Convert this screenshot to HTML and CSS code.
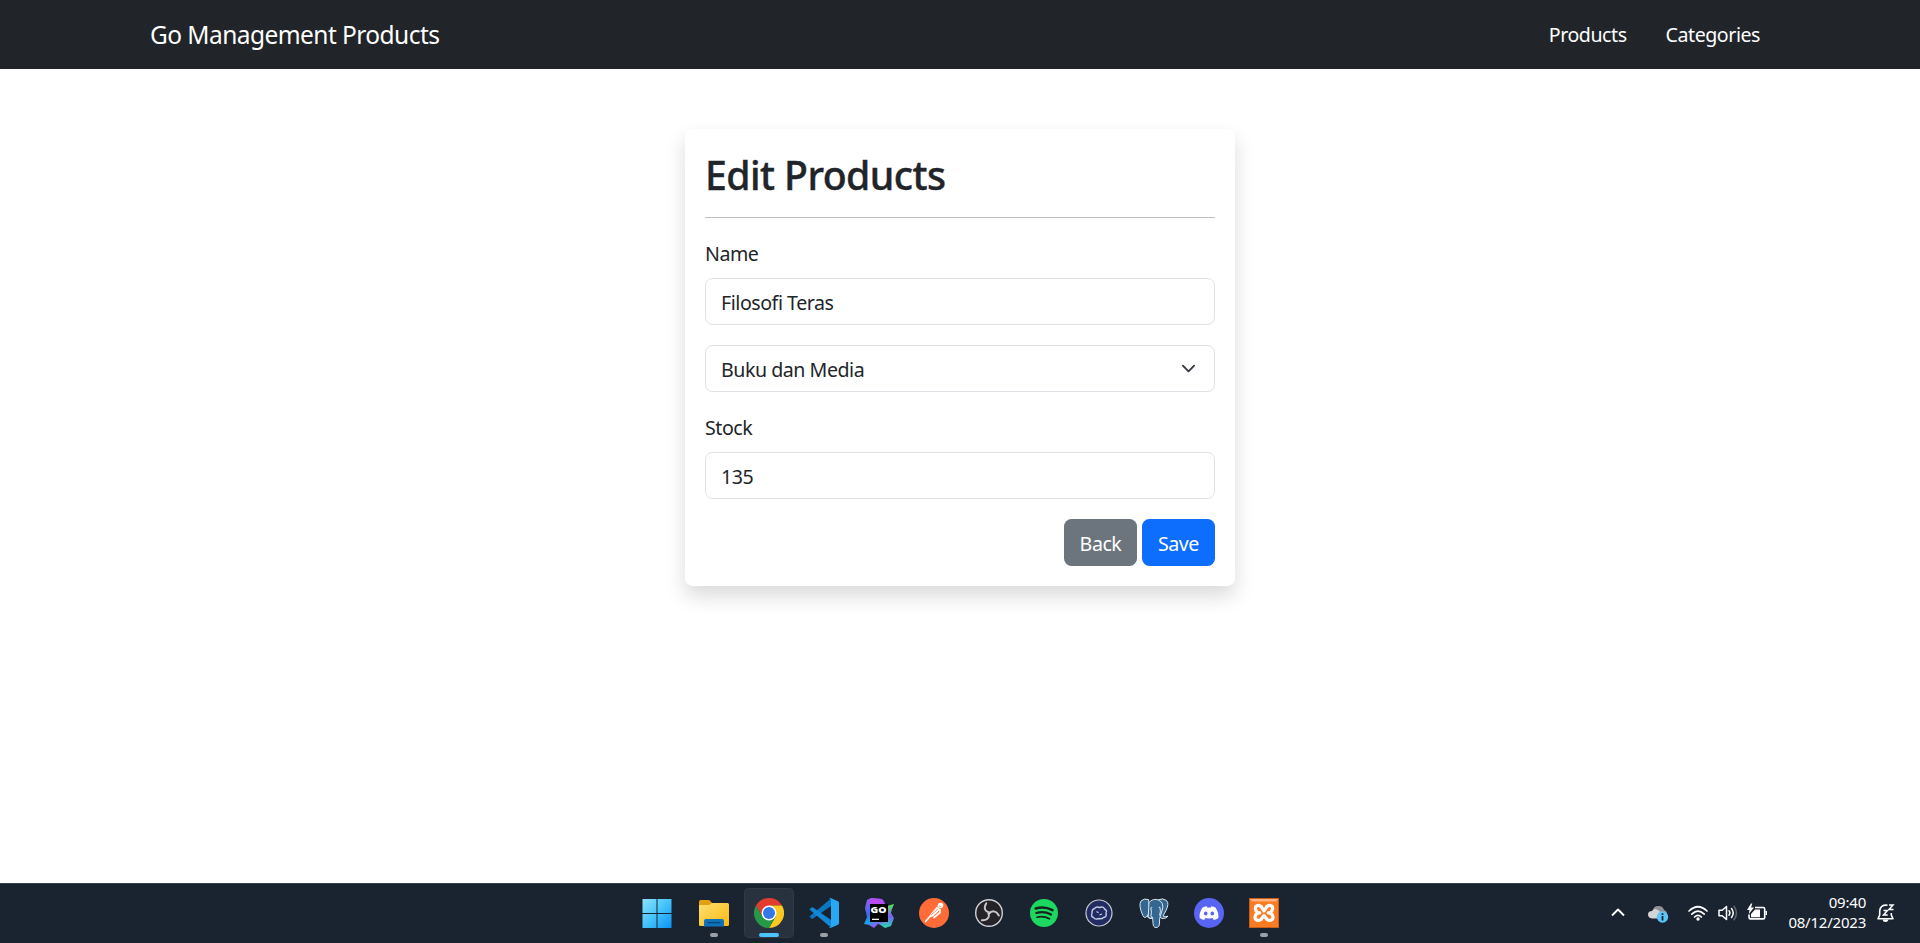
FILE: index.html
```html
<!DOCTYPE html>
<html lang="id">
<head>
<meta charset="utf-8">
<title>Edit Products</title>
<link rel="stylesheet" href="styles.css">
</head>
<body>
<nav class="navbar">
  <a class="brand">Go Management Products</a>
  <div class="nav-links"><a class="nav-products">Products</a><a class="nav-categories">Categories</a></div>
</nav>
<main class="content">
  <form class="card">
    <h2 class="title">Edit Products</h2>
    <hr class="rule">
    <label class="label label-name">Name</label>
    <div class="control">Filosofi Teras</div>
    <div class="control select"><span>Buku dan Media</span>
      <svg class="caret" width="15" height="15" viewBox="0 0 16 16"><path d="m2 5 6 6 6-6" fill="none" stroke="#343a40" stroke-width="2" stroke-linecap="round" stroke-linejoin="round"/></svg>
    </div>
    <label class="label label-stock">Stock</label>
    <div class="control number">135</div>
    <div class="actions"><button type="button" class="btn back">Back</button><button type="button" class="btn save">Save</button></div>
  </form>
</main>
<footer class="taskbar">
  <div class="apps">
    <div class="app start">
      <svg width="30" height="30" viewBox="0 0 30 30"><defs><linearGradient id="win" gradientUnits="userSpaceOnUse" x1="0" y1="0" x2="30" y2="30"><stop offset="0" stop-color="#8fe3ff"/><stop offset=".5" stop-color="#45c4fb"/><stop offset="1" stop-color="#0a92f5"/></linearGradient></defs><path fill="url(#win)" d="M.5 1h14v14H.5zM15.500 1h14v14h-14zM.5 16h14v14H.5zM15.500 16h14v14h-14z"/></svg>
    </div>
    <div class="app">
      <svg width="30" height="30" viewBox="0 0 30 30"><defs><linearGradient id="fold" x1="0" y1="0" x2="1" y2="1"><stop offset="0" stop-color="#ffdf70"/><stop offset="1" stop-color="#fbb911"/></linearGradient></defs><path fill="#e0a010" d="M0 3.500q0-1.500 1.500-1.500h8q1 0 1.700.7L13 5v5H0z"/><path fill="url(#fold)" d="M0 7h9.500q1 0 1.800-.7l.7-.7q.7-.6 1.700-.6H28.500Q30 5 30 6.500v20q0 1.500-1.500 1.500h-27Q0 28 0 26.500z"/><path fill="#1072bd" d="M5 28.500v-5.500q0-2 2-2h16q2 0 2 2v5.500z"/><path stroke="#0b4470" stroke-width="1.200" d="M8.500 24.700h13"/></svg>
      <i class="mark"></i>
    </div>
    <div class="app active">
      <svg width="30" height="30" viewBox="0 0 30 30"><path fill="#e33b2e" d="M2 7.500a15 15 0 0 1 26 0H15L8.500 18.750z"/><path fill="#fcc922" d="M28 7.500A15 15 0 0 1 15 30l6.500-11.250L15 7.500z"/><path fill="#279847" d="M15 30A15 15 0 0 1 2 7.500l6.500 11.250 13 0z"/><circle cx="15" cy="15" r="7.500" fill="#fff"/><circle cx="15" cy="15" r="6" fill="#3478e8"/></svg>
      <i class="mark"></i>
    </div>
    <div class="app">
      <svg width="30" height="30" viewBox="0 0 30 30"><path fill="#0878c4" d="m.5 18.500 2 2q.7.500 1.500 0L22 8V.5z"/><path fill="#1387d3" d="m.5 11.500 2-2q.7-.5 1.500 0L22 22v7.500z"/><path fill="#2ba6f2" d="M21.500 0 29 3.300q1 .5 1 1.600v20.200q0 1.100-1 1.600L21.500 30q-1 .2-1.700-.6 2.200.6 2.200-1.400V2Q22 0 19.800.6q.8-.8 1.700-.6z"/></svg>
      <i class="mark"></i>
    </div>
    <div class="app">
      <svg width="30" height="30" viewBox="0 0 30 30"><defs><linearGradient id="go1" x1="0" y1="0" x2=".3" y2="1"><stop offset="0" stop-color="#9a5cf0"/><stop offset=".55" stop-color="#4169f0"/><stop offset=".8" stop-color="#15a5e9"/><stop offset="1" stop-color="#9b59ef"/></linearGradient><linearGradient id="go2" x1="0" y1="0" x2="0" y2="1"><stop offset="0" stop-color="#53ed50"/><stop offset=".5" stop-color="#7960f0"/><stop offset="1" stop-color="#24dbb0"/></linearGradient></defs><path fill="url(#go1)" d="m7 0 10 1 3 2 2 7-2 17-6-1-4 4-5-3-5-1 3-7-2-9 2-8z"/><path fill="url(#go2)" d="m23 8 7-2-2 5-1 4 3 5-3 8-6 2-6-4 8-3z"/><path fill="#b84bf2" d="m7 0 11 1 3 5H5z"/><path d="M6 6h18v18H6z"/><text class="go-text" x="6.500" y="15" textLength="16" lengthAdjust="spacingAndGlyphs">GO</text><path fill="#fff" d="M8 20.700h7v1.300H8z"/></svg>
    </div>
    <div class="app">
      <svg width="30" height="30" viewBox="0 0 30 30"><circle cx="15" cy="15" r="15" fill="#ff6c37"/><circle cx="21.500" cy="7.500" r="2.800" fill="#fff"/><path fill="#fff" d="m18 8.500 3 3-7 7-4.500 1 2.500-4z"/><path stroke="#fff" stroke-width="1.700" stroke-linecap="round" fill="none" d="m10.500 19-4 4.500M21 11.500v3l-6 5"/><path stroke="#ff6c37" stroke-width=".7" d="m12 17 7-6m1-3 2 1"/></svg>
    </div>
    <div class="app">
      <svg width="30" height="30" viewBox="0 0 30 30"><circle cx="15" cy="15" r="13.300" fill="#252328" stroke="#d2d1d3" stroke-width="1.400"/><g fill="none" stroke="#c9c7ca" stroke-width="1.900" stroke-linecap="round"><path id="blade" d="M15.500 14.500C11.500 14 9 10.500 12.300 5.200"/><use href="#blade" transform="rotate(120 15 15)"/><use href="#blade" transform="rotate(240 15 15)"/></g></svg>
    </div>
    <div class="app">
      <svg width="30" height="30" viewBox="0 0 30 30"><circle cx="15" cy="15" r="14" fill="#1ed760"/><g fill="none" stroke="#17231d" stroke-linecap="round"><path stroke-width="2.600" d="M6.700 10.500Q15.500 8 23.500 12.200"/><path stroke-width="2.200" d="M7.300 15Q15 12.800 22 16.500"/><path stroke-width="1.700" d="M8 19.200Q14.500 17.500 20.500 20.800"/></g></svg>
    </div>
    <div class="app">
      <svg width="30" height="30" viewBox="0 0 30 30"><circle cx="15" cy="15" r="13" fill="#222c63" stroke="#c9cad1" stroke-width="1.200"/><path fill="none" stroke="#c4cce4" stroke-width="1.400" stroke-linejoin="round" d="M10.500 10.500q2-2.500 5-1 4-1.500 5 1.500 3 1.500 1.500 4 1 4-2.500 4.500-2 2-4.500 1-4 1.500-5.500-1-3-1-1.500-4-.5-4 2.500-5z"/><path fill="none" stroke="#c4cce4" stroke-width="1.300" d="m12.500 13.500 2 1.200m1 2.300 2.500-1"/></svg>
    </div>
    <div class="app">
      <svg width="30" height="30" viewBox="0 0 30 30"><g fill="#336791" stroke="#dce6ed" stroke-width="1" stroke-linejoin="round"><path d="M19 2q5-2.500 8.500.5 3 3-.5 10l-3 5.500q2 1.200 5 .2-1.500 2.500-6 2.300l-4-3z"/><path d="M9.500 1.500Q5 0 2 3-.8 7 3.800 17.500q2 3.800 4.200.5l3-4z"/><path d="M10 4.500Q14 0 19.500 2q5.500 3 4 9l-2.300 7.500q-.9 2-.7 6.500 0 4.500-3.500 4.500-2.800 0-3-4.200l-.3-5Q9 21 9.300 17z"/></g><path fill="none" stroke="#dce6ed" d="M8 18q2 4 6 1.500-2 .5-2-2 1-3-.2-7.500M21 9.500q1 4-.5 8"/><path fill="#fff" d="m11.500 9.500 2-.4-.8 1.200zM19.500 9l2-.2-1 1.300z"/></svg>
    </div>
    <div class="app">
      <svg width="30" height="30" viewBox="0 0 30 30"><circle cx="15" cy="15" r="15" fill="#5865f2"/><path fill="#fff" d="m12.800 8.300.7 1.400q1.500-.2 3 0l.7-1.400q2.200.2 4.200 1.300 3.500 5 3 10.400-2 1.500-4.600 2.100l-1.200-1.900 1.400-.8q-5 2-10 0l1.400.8-1.200 1.900Q7.700 21.500 5.600 20 5 14.600 8.600 9.600q2-1.100 4.200-1.300z"/><ellipse cx="11.700" cy="15.600" rx="1.800" ry="2" fill="#5865f2"/><ellipse cx="18.300" cy="15.600" rx="1.800" ry="2" fill="#5865f2"/></svg>
    </div>
    <div class="app">
      <svg width="30" height="30" viewBox="0 0 30 30"><path fill="#c65f17" d="M0 0h30v30H0z"/><path fill="#fb7a24" d="M1 1h28v28H1z"/><path fill="#ffb07c" d="M1 1h28l-2 2.500H3z"/><path fill="none" stroke="#fff" stroke-width="3.300" stroke-linejoin="round" stroke-linecap="round" d="M15 12.800 12 8.300Q9 6.300 6.800 8.500 5.500 12 8.500 14.800 5 18 6.500 21q2.500 2.500 5.500.5l3-4 3 4q3 2 5.500-.5 1.500-3-2-6.200 3-2.800 1.700-6.300Q21 6.300 18 8.300zM8.500 14.800h2.300M21.500 14.800h-2.300"/></svg>
      <i class="mark"></i>
    </div>
  </div>
  <div class="tray">
    <svg class="chevron" width="14" height="9" viewBox="0 0 14 9"><path d="m1 7.500 6-6 6 6" fill="none" stroke="#fff" stroke-width="1.900" stroke-linejoin="round"/></svg>
    <svg class="cloud" width="21" height="20" viewBox="0 0 21 20"><path fill="#8f9296" d="M5 8q0-5 5.500-5 4.500 0 5.500 4 3.500 1 3 5l-5 3z"/><path fill="#d5d5d6" d="M4 15.500Q0 15 0 11.500t4-3.500q2-3 5-1.500l5 3.500-3 5.500z"/><circle cx="14.500" cy="14" r="5.700" fill="#5bc5fa"/><path fill="#10222e" d="M13.600 10.200h1.800V12h-1.800zM13.600 13h1.800v4.500h-1.800z"/></svg>
    <svg class="wifi" width="20" height="20" viewBox="0 0 20 20"><g fill="none" stroke="#fff" stroke-width="1.700" stroke-linecap="round"><path d="M1 8q9-8.500 18 0M3.800 11.100q6.200-6 12.400 0M6.600 14q3.400-3.400 6.800 0"/></g><circle cx="10" cy="16" r="1.700" fill="#fff"/></svg>
    <svg class="volume" width="20" height="20" viewBox="0 0 20 20"><g fill="none" stroke="#fff" stroke-width="1.500" stroke-linejoin="round" stroke-linecap="round"><path d="M1 7.200h3.200L8.500 3.500v13l-4.300-3.700H1zM11 7.800q1.800 2.200 0 4.400M13.500 5.500q3.500 4.500 0 9"/><path stroke="#5e6670" d="M16 3.300q5 6.700 0 13.400"/></g></svg>
    <svg class="battery" width="21" height="20" viewBox="0 0 21 20"><path fill="none" stroke="#fff" stroke-width="1.600" d="M8 4.500h8.200q1.500 0 1.500 1.500v8.400q0 1.500-1.500 1.500H4q-2 0-2-2v-2.500"/><path fill="#fff" d="M8 6.500h5v7.700H4V11zM18.500 8H20v4h-1.500zM4 .5 0 7h2.500L1.800 11 7 4.500H4L5.300.5z"/></svg>
    <div class="clock"><span class="time">09:40</span><span class="date">08/12/2023</span></div>
    <svg class="bell" width="18" height="20" viewBox="0 0 18 20"><path fill="none" stroke="#fff" stroke-width="1.600" stroke-linejoin="round" d="M10.500 2.200Q3 1.500 2.700 8v4L1 15.800h15L14.300 12v-2"/><path fill="#fff" d="M5.500 16.500h6q-.5 2.500-3 2.500t-3-2.500z"/><path fill="none" stroke="#fff" stroke-width="1.500" d="M6.500 7.500h4l-4 4.500h4.200M12 2h4l-4 4.500h4.500"/></svg>
  </div>
</footer>
</body>
</html>
```
FILE: styles.css
```css
* { box-sizing: border-box; }
body {
  margin: 0;
  height: 943px;
  display: flex;
  flex-direction: column;
  overflow: hidden;
  background: #fff;
  color: #212529;
  font: 19.6px/30px "Noto Sans", "Open Sans", sans-serif;
  letter-spacing: -0.46px;
}
svg { display: block; flex: none; }
.navbar {
  height: 69px;
  flex: none;
  padding: 0 160px 0 150px;
  display: flex;
  align-items: center;
  justify-content: space-between;
  background: #212529;
  color: #fff;
}
.brand { font-size: 24.5px; letter-spacing: -0.56px; }
.nav-links { display: flex; gap: 39px; }
.content { flex: 1; padding-top: 60px; }
.card {
  width: 550px;
  height: 457px;
  margin: 0 auto;
  padding: 20px;
  border-radius: 8px;
  background: #fff;
  box-shadow: 0 10px 20px rgba(0, 0, 0, .15);
}
.title {
  height: 48px;
  margin: 0;
  padding-top: 2px;
  font-size: 39.2px;
  line-height: 48px;
  font-weight: 500;
  letter-spacing: -0.56px;
  -webkit-text-stroke: 0.4px #212529;
}
.rule { margin: 20px 0; border: 0; border-top: 1px solid #c0c1c2; }
.label { display: block; height: 30px; margin-bottom: 10px; padding-top: 1px; }
.control {
  height: 47px;
  margin-bottom: 20px;
  padding: 0 15px;
  border: 1px solid #dee2e6;
  border-radius: 7.5px;
  line-height: 47px;
}
.select { display: flex; justify-content: space-between; }
.caret { margin: 15px 3px 0 0; }
.actions { display: flex; justify-content: flex-end; gap: 5px; }
.btn {
  width: 73px;
  height: 47px;
  padding: 3px 0 0;
  border: 0;
  border-radius: 7.5px;
  color: #fff;
  font: inherit;
  letter-spacing: inherit;
}
.back { background: #6c757d; }
.save { background: #0d6efd; }
.taskbar {
  height: 60px;
  flex: none;
  display: flex;
  justify-content: space-between;
  padding-left: 634px;
  border-top: 1px solid #37404b;
  background: #1a2431;
  color: #fff;
}
.apps { display: flex; gap: 5px; padding-top: 4px; }
.app {
  width: 50px;
  height: 50px;
  padding-top: 10px;
  display: flex;
  flex-direction: column;
  align-items: center;
  gap: 5px;
  border-radius: 5px;
}
.start { padding-right: 4px; }
.active { background: #28323e; box-shadow: inset 0 0 0 1px #303a45; }
.mark { width: 8px; height: 4px; border-radius: 2px; background: #9ba0a6; }
.active .mark { width: 20px; background: #4cc2ff; }
.go-text { fill: #fff; font: 800 9.5px "Open Sans", sans-serif; letter-spacing: 0; }
.tray { display: flex; align-items: center; padding: 0 25px 2px 0; }
.cloud { margin-left: 23px; }
.wifi { margin-left: 19px; }
.volume { margin-left: 10px; }
.battery { margin-left: 9px; }
.clock {
  width: 98px;
  display: flex;
  flex-direction: column;
  align-items: flex-end;
  padding-bottom: 2px;
  font-size: 15px;
  line-height: 20px;
  letter-spacing: -0.22px;
}
.bell { margin-left: 11px; }
```
